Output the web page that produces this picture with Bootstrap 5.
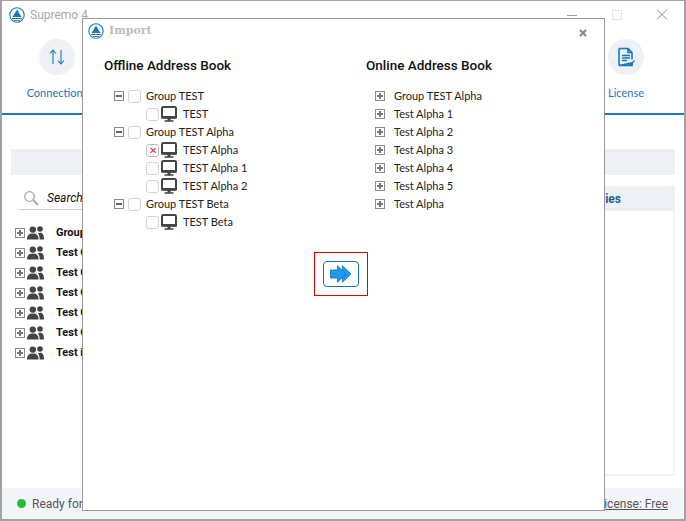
<!doctype html>
<html lang="en">
<head>
<meta charset="utf-8">
<title>Supremo 4</title>
<link href="https://cdn.jsdelivr.net/npm/bootstrap@5.3.3/dist/css/bootstrap.min.css" rel="stylesheet">
<style>
html, body { height: 100%; margin: 0; }
body { font-family: Roboto, "Open Sans", sans-serif; font-size: 12px; color: #111; background: #fff; overflow: hidden; }
.app-win { position: relative; width: 686px; height: 521px; border: 2px solid #a3a3a3; border-top-width: 1px; overflow: hidden; }
.app-title { height: 36px; padding: 6px 0 0 7px; color: #a9a9a9; font-size: 12px; }
.app-name { line-height: 17px; margin-left: 1px; }
.win-ctl { width: 45px; }
.tool-bar { height: 78px; border-bottom: 2px solid #1a7bc4; padding: 2px 25px 0 22px; }
.tool-item { width: 66px; color: #1a75bb; font-family: Lato, Roboto, sans-serif; font-size: 11px; }
.tool-circle { width: 36px; height: 36px; border-radius: 50%; background: #edf1f5; margin-bottom: 10px; }
.grey-strip { height: 26px; margin: 34px 9px 0 9px; background: #edf1f5; }
.work-area { height: 290px; margin: 11px 9px 0 9px; }
.left-pane { width: 300px; }
.search-line { width: 260px; height: 24px; margin-left: 8px; border-bottom: 1px solid #ccc; font-style: italic; padding-left: 4px; }
.group-row { height: 20px; padding-left: 4px; font-size: 11px; font-weight: 700; }
.group-list { margin-top: 13px; }
.group-icon { margin: 0 12px 0 2px; }
.right-pane { width: 280px; border: 2px solid #f0f2f5; border-top: 0; }
.right-head { height: 25px; background: #edf1f5; color: #1a5f9b; font-weight: 700; padding-right: 54px; margin: 0 -2px; }
.status-bar { position: absolute; left: 0; right: 0; bottom: 0; height: 31px; background: #f2f6fb; padding: 0 16px 0 15px; color: #555; }
.status-dot { width: 9px; height: 9px; border-radius: 50%; background: #1fc12c; margin-right: 6px; }
.status-link { color: #555; text-decoration: underline; }
.import-dlg { position: absolute; left: 80px; top: 17px; width: 523px; height: 493px; background: #fff; border: 1px solid #999; }
.dlg-head { height: 27px; padding: 4px 17px 0 5px; }
.dlg-title { color: #bdbdbd; font-weight: 700; font-size: 11px; margin-left: 1px; font-family: "DejaVu Serif", serif; }
.dlg-close { margin-top: 6px; }
.book-col { width: 262px; flex: none; }
.book-title { font-size: 13.5px; font-weight: 500; color: #111; height: 22px; line-height: 22px; margin-bottom: 11px; }
.book-cols { padding: 8px 0 0 21px; }
.tree-row { height: 18px; color: #222; font-family: Lato, Roboto, sans-serif; font-size: 11px; }
.tree-group { padding-left: 10px; }
.tree-leaf { padding-left: 42px; }
.tree-online { padding-left: 9px; }
.exp-box { width: 10px; height: 10px; flex: none; }
.chk-box { width: 13px; height: 13px; flex: none; border: 1px solid #d2d2d2; border-radius: 3px; background: #fff; margin-left: 4px; margin-right: 5px; }
.tree-leaf .chk-box { margin: 0 2px 0 0; }
.chk-x { color: #e8222a; font-size: 10px; line-height: 11px; text-align: center; border-color: #bbb; }
.leaf-name { margin-left: 6px; }
.online-name { margin-left: 9px; }
.move-frame { width: 54px; height: 44px; border: 1px solid #e60000; margin: 21px 0 0 231px; }
.move-btn { width: 36px; height: 26px; border: 1.5px solid #1a75b8; border-radius: 4px; background: #fff; padding: 0; }
</style>
</head>
<body>
<svg width="0" height="0" class="d-block" style="position:absolute">
  <defs>
    <symbol id="logo" viewBox="0 0 16 16">
      <circle cx="8" cy="8" r="7.2" fill="none" stroke="#1b78bd" stroke-width="1.1"/>
      <path d="M8 2.5 12.5 10H3.500Z" fill="#1b78bd"/>
      <path d="M3 11h10v1H3zM5 13h6v.8H5z" fill="#1b78bd"/>
    </symbol>
    <symbol id="plus" viewBox="0 0 10 10">
      <rect x=".5" y=".5" width="9" height="9" fill="#fff" stroke="#8a8a8a"/>
      <path d="M2 4h6v2H2zM4 2h2v6H4z" fill="#777"/>
    </symbol>
    <symbol id="minus" viewBox="0 0 10 10">
      <rect x=".5" y=".5" width="9" height="9" fill="#fff" stroke="#8a8a8a"/>
      <path d="M2 4h6v2H2z" fill="#666"/>
    </symbol>
    <symbol id="monitor" viewBox="0 0 16 16">
      <rect x="1" y="1" width="14" height="10.500" rx="1.200" fill="none" stroke="#444" stroke-width="2"/>
      <path d="M0 10h16v1.800q0 .9-1 .9H1q-1 0-1-.9zM6.500 12.500h3v1.800h-3zM3.500 14.300h9v1.500h-9z" fill="#444"/>
    </symbol>
    <symbol id="people" viewBox="0 0 17 14">
      <circle cx="5.800" cy="3.600" r="3.200" fill="#444"/>
      <path d="M0 13.500c0-4.300 2-6.100 5.800-6.100s5.800 1.800 5.800 6.100z" fill="#444"/>
      <circle cx="13" cy="3" r="2.800" fill="#444"/>
      <path d="M12.700 13.500c0-2.800-.5-4.700-2-6 .7-.5 1.500-.7 2.400-.7 2.800 0 3.900 2.200 3.900 6.700z" fill="#444"/>
    </symbol>
  </defs>
</svg>

<div class="app-win">
  <div class="app-title d-flex align-items-start">
    <svg width="16" height="16" class="me-1"><use href="#logo"/></svg>
    <span class="app-name flex-grow-1">Supremo 4</span>
    <div class="d-flex align-items-start">
      <div class="win-ctl d-flex justify-content-center"><svg width="12" height="16"><path d="M1 8.500h10" stroke="#a0a0a0"/></svg></div>
      <div class="win-ctl d-flex justify-content-center"><svg width="12" height="16"><rect x="1.500" y="3.500" width="9" height="9" fill="none" stroke="#e3e3e3"/></svg></div>
      <div class="win-ctl d-flex justify-content-center"><svg width="12" height="16"><path d="M1 2.500l10 10M11 2.500l-10 10" stroke="#909090"/></svg></div>
    </div>
  </div>
  <div class="tool-bar d-flex justify-content-between">
    <div class="tool-item d-flex flex-column align-items-center">
      <div class="tool-circle d-flex align-items-center justify-content-center">
        <svg width="16" height="16" viewBox="0 0 16 16" fill="none" stroke="#1a75bb" stroke-width="1.100"><path d="M4 15V1M1 4.500 4 1l3 3.500M12 1v14M9 11.500l3 3.500 3-3.500"/></svg>
      </div>
      <span>Connections</span>
    </div>
    <div class="tool-item d-flex flex-column align-items-center">
      <div class="tool-circle d-flex align-items-center justify-content-center">
        <svg width="20" height="20" viewBox="0 0 20 20" fill="none" stroke="#1a75bb" stroke-width="1.600"><path d="M3 1.500h9l4 4v7M16 16v2.500H3z M3 1.500v17M12 1.500v4h4"/><path d="M6 8.500h8M6 11h8M6 13.500h5" stroke-width="1.300"/><path d="M12.500 16l2 2 4-4.500" stroke-width="1.200"/></svg>
      </div>
      <span>License</span>
    </div>
  </div>
  <div class="grey-strip"></div>
  <div class="work-area d-flex justify-content-between">
    <div class="left-pane">
      <div class="search-line d-flex align-items-center">
        <svg width="16" height="16" viewBox="0 0 16 16" class="me-2" fill="none" stroke="#aaa"><circle cx="6.500" cy="6.500" r="4.800" stroke-width="1.300"/><path d="M10 10l5 5" stroke-width="2"/></svg>
        <span>Search</span>
      </div>
      <div class="group-list">
        <div class="group-row d-flex align-items-center"><svg width="10" height="10" class="exp-box"><use href="#plus"/></svg><svg width="17" height="14" class="group-icon"><use href="#people"/></svg><span>Group</span></div>
        <div class="group-row d-flex align-items-center"><svg width="10" height="10" class="exp-box"><use href="#plus"/></svg><svg width="17" height="14" class="group-icon"><use href="#people"/></svg><span>Test G</span></div>
        <div class="group-row d-flex align-items-center"><svg width="10" height="10" class="exp-box"><use href="#plus"/></svg><svg width="17" height="14" class="group-icon"><use href="#people"/></svg><span>Test G</span></div>
        <div class="group-row d-flex align-items-center"><svg width="10" height="10" class="exp-box"><use href="#plus"/></svg><svg width="17" height="14" class="group-icon"><use href="#people"/></svg><span>Test G</span></div>
        <div class="group-row d-flex align-items-center"><svg width="10" height="10" class="exp-box"><use href="#plus"/></svg><svg width="17" height="14" class="group-icon"><use href="#people"/></svg><span>Test G</span></div>
        <div class="group-row d-flex align-items-center"><svg width="10" height="10" class="exp-box"><use href="#plus"/></svg><svg width="17" height="14" class="group-icon"><use href="#people"/></svg><span>Test G</span></div>
        <div class="group-row d-flex align-items-center"><svg width="10" height="10" class="exp-box"><use href="#plus"/></svg><svg width="17" height="14" class="group-icon"><use href="#people"/></svg><span>Test i</span></div>
      </div>
    </div>
    <div class="right-pane">
      <div class="right-head d-flex align-items-center justify-content-end">Properties</div>
    </div>
  </div>
  <div class="status-bar d-flex align-items-center justify-content-between">
    <div class="d-flex align-items-center"><span class="status-dot"></span><span>Ready for</span></div>
    <span class="status-link">License: Free</span>
  </div>

  <div class="import-dlg">
    <div class="dlg-head d-flex align-items-start justify-content-between">
      <div class="d-flex align-items-center">
        <svg width="16" height="16" class="me-1"><use href="#logo"/></svg>
        <span class="dlg-title">Import</span>
      </div>
      <svg width="8" height="8" viewBox="0 0 8 8" class="dlg-close"><path d="M1 1l6 6M7 1 1 7" stroke="#8c8c8c" stroke-width="2.200"/></svg>
    </div>
    <div class="book-cols d-flex">
      <div class="book-col">
        <div class="book-title">Offline Address Book</div>
        <div class="tree-row tree-group d-flex align-items-center"><svg width="10" height="10" class="exp-box"><use href="#minus"/></svg><span class="chk-box"></span><span>Group TEST</span></div>
        <div class="tree-row tree-leaf d-flex align-items-center"><span class="chk-box"></span><svg width="16" height="16"><use href="#monitor"/></svg><span class="leaf-name">TEST</span></div>
        <div class="tree-row tree-group d-flex align-items-center"><svg width="10" height="10" class="exp-box"><use href="#minus"/></svg><span class="chk-box"></span><span>Group TEST Alpha</span></div>
        <div class="tree-row tree-leaf d-flex align-items-center"><span class="chk-box chk-x">&#10005;</span><svg width="16" height="16"><use href="#monitor"/></svg><span class="leaf-name">TEST Alpha</span></div>
        <div class="tree-row tree-leaf d-flex align-items-center"><span class="chk-box"></span><svg width="16" height="16"><use href="#monitor"/></svg><span class="leaf-name">TEST Alpha 1</span></div>
        <div class="tree-row tree-leaf d-flex align-items-center"><span class="chk-box"></span><svg width="16" height="16"><use href="#monitor"/></svg><span class="leaf-name">TEST Alpha 2</span></div>
        <div class="tree-row tree-group d-flex align-items-center"><svg width="10" height="10" class="exp-box"><use href="#minus"/></svg><span class="chk-box"></span><span>Group TEST Beta</span></div>
        <div class="tree-row tree-leaf d-flex align-items-center"><span class="chk-box"></span><svg width="16" height="16"><use href="#monitor"/></svg><span class="leaf-name">TEST Beta</span></div>
      </div>
      <div class="book-col">
        <div class="book-title">Online Address Book</div>
        <div class="tree-row tree-online d-flex align-items-center"><svg width="10" height="10" class="exp-box"><use href="#plus"/></svg><span class="online-name">Group TEST Alpha</span></div>
        <div class="tree-row tree-online d-flex align-items-center"><svg width="10" height="10" class="exp-box"><use href="#plus"/></svg><span class="online-name">Test Alpha 1</span></div>
        <div class="tree-row tree-online d-flex align-items-center"><svg width="10" height="10" class="exp-box"><use href="#plus"/></svg><span class="online-name">Test Alpha 2</span></div>
        <div class="tree-row tree-online d-flex align-items-center"><svg width="10" height="10" class="exp-box"><use href="#plus"/></svg><span class="online-name">Test Alpha 3</span></div>
        <div class="tree-row tree-online d-flex align-items-center"><svg width="10" height="10" class="exp-box"><use href="#plus"/></svg><span class="online-name">Test Alpha 4</span></div>
        <div class="tree-row tree-online d-flex align-items-center"><svg width="10" height="10" class="exp-box"><use href="#plus"/></svg><span class="online-name">Test Alpha 5</span></div>
        <div class="tree-row tree-online d-flex align-items-center"><svg width="10" height="10" class="exp-box"><use href="#plus"/></svg><span class="online-name">Test Alpha</span></div>
      </div>
    </div>
    <div class="move-frame d-flex align-items-center justify-content-center">
      <button type="button" class="move-btn d-flex align-items-center justify-content-center" aria-label="Move">
        <svg width="22" height="18" viewBox="0 0 22 18"><path d="M12.500 .8 21 9l-8.500 8.200z" fill="#1b9cf0" stroke="#1a75b8" stroke-width=".8"/><path d="M.5 5H7.500V.8L16 9l-8.500 8.200V13H.5z" fill="#1b9cf0" stroke="#1a75b8" stroke-width=".9"/></svg>
      </button>
    </div>
  </div>
</div>
<script src="https://cdn.jsdelivr.net/npm/bootstrap@5.3.3/dist/js/bootstrap.bundle.min.js"></script>
</body>
</html>
